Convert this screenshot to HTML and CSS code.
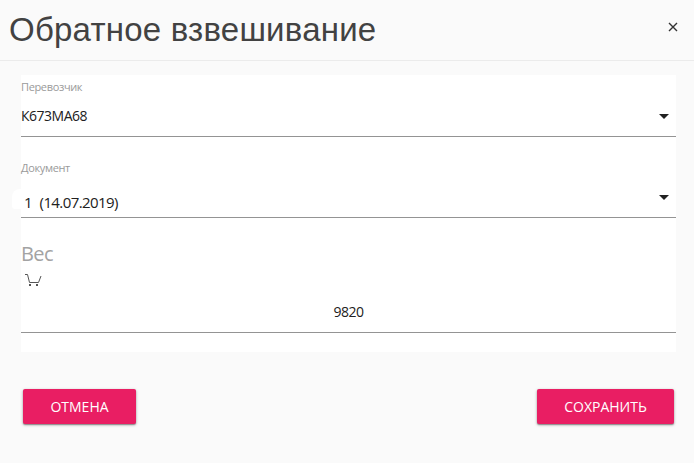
FILE: index.html
```html
<!DOCTYPE html>
<html lang="ru">

<head>
    <meta charset="UTF-8">
    <meta name="viewport" content="width=device-width, initial-scale=1.0">
    <title>Обратное взвешивание</title>
    <link rel="stylesheet" href="styles.css">
</head>

<body>
    <div class="modal">
        <header class="modal-header">
            <h1>Обратное взвешивание</h1>
            <button type="button" class="close" aria-label="Закрыть">
                <svg width="10" height="10" viewBox="0 0 10 10">
                    <path d="M1 1L9 9M9 1L1 9" stroke="#333" stroke-width="1.4" fill="none"/>
                </svg>
            </button>
        </header>

        <div class="modal-body">
            <div class="field carrier">
                <label class="field-label">Перевозчик</label>
                <div class="select">
                    <span class="value">К673МА68</span>
                    <span class="caret"></span>
                </div>
            </div>

            <div class="field document">
                <label class="field-label">Документ</label>
                <div class="select">
                    <span class="value">1&nbsp; (14.07.2019)</span>
                    <span class="caret"></span>
                </div>
            </div>

            <div class="field weight">
                <label class="weight-label">Вес</label>
                <svg class="cart" width="18" height="14" viewBox="0 0 18 14">
                    <path d="M0 1.5H2.5L4.5 9.5H13.5L16 3" stroke="#555" stroke-width="1" fill="none"/>
                    <rect x="4" y="11" width="2" height="2" fill="#555"/>
                    <rect x="11" y="11" width="2" height="2" fill="#555"/>
                </svg>
                <div class="weight-value">9820</div>
            </div>
        </div>

        <footer class="modal-footer">
            <button type="button" class="btn">ОТМЕНА</button>
            <button type="button" class="btn btn-save">СОХРАНИТЬ</button>
        </footer>
    </div>
</body>

</html>
```
FILE: styles.css
```css
* {
    box-sizing: border-box;
}

body {
    margin: 0;
    background-color: #fafafa;
    font-family: "Open Sans", "Noto Sans", sans-serif;
    color: #212121;
    overflow: hidden;
}

.modal {
    display: flex;
    flex-direction: column;
    height: 463px;
}

.modal-header {
    display: flex;
    justify-content: space-between;
    height: 61px;
    padding: 0 16px 0 9px;
    border-bottom: 1px solid #ebebeb;
}

h1 {
    margin: 0;
    font-family: "Liberation Sans", Arial, sans-serif;
    font-size: 33px;
    font-weight: normal;
    line-height: 60px;
    letter-spacing: 0.22px;
    color: #424242;
}

.close {
    align-self: flex-start;
    margin-top: 22px;
    padding: 0;
    border: none;
    background: none;
    cursor: pointer;
}

.close svg {
    display: block;
}

.modal-body {
    height: 277px;
    margin: 14px 18px 0 21px;
    background-color: #fff;
}

.field {
    display: flex;
    flex-direction: column;
    border-bottom: 1px solid #949494;
}

.carrier {
    height: 62px;
}

.document {
    height: 81px;
    padding-top: 19px;
}

.weight {
    height: 115px;
    padding-top: 21px;
}

.field-label {
    height: 24px;
    font-size: 11px;
    line-height: 24px;
    letter-spacing: -0.35px;
    color: #9a9a9a;
}

.select {
    display: flex;
    justify-content: space-between;
    height: 34px;
    padding-right: 7px;
    font-size: 14px;
    line-height: 34px;
    letter-spacing: -0.5px;
}

.carrier .select {
    line-height: 33px;
}

.document .select {
    position: relative;
    padding-left: 3px;
    font-size: 15px;
    line-height: 44px;
    letter-spacing: -0.6px;
    word-spacing: 0.5px;
}

/* rounded highlight to the left of the value */
.document .select::before {
    content: "";
    position: absolute;
    left: -9px;
    top: 0;
    width: 9px;
    height: 20px;
    margin-top: 9px;
    border-radius: 8px 0 0 3px;
    background-color: #fff;
}

.caret {
    align-self: flex-start;
    margin-top: 15px;
    border-left: 5px solid transparent;
    border-right: 5px solid transparent;
    border-top: 5px solid #212121;
}

.weight-label {
    height: 30px;
    font-size: 20px;
    line-height: 29px;
    letter-spacing: -0.6px;
    color: #a3a3a3;
}

.cart {
    margin: 4px 0 0 4px;
}

.weight-value {
    margin-top: 13px;
    font-size: 14px;
    line-height: 24px;
    letter-spacing: -0.5px;
    text-align: center;
}

.modal-footer {
    display: flex;
    justify-content: space-between;
    margin-top: 37px;
    padding: 0 20px 0 23px;
}

.btn {
    width: 113px;
    height: 35px;
    padding: 0;
    border: none;
    border-radius: 2px;
    background-color: #e91e63;
    color: #fff;
    font-family: inherit;
    font-size: 14px;
    font-weight: 500;
    cursor: pointer;
    box-shadow: 0 1px 3px rgba(0, 0, 0, 0.35), 0 1px 1px rgba(0, 0, 0, 0.25);
}

.btn-save {
    width: 137px;
}
```
